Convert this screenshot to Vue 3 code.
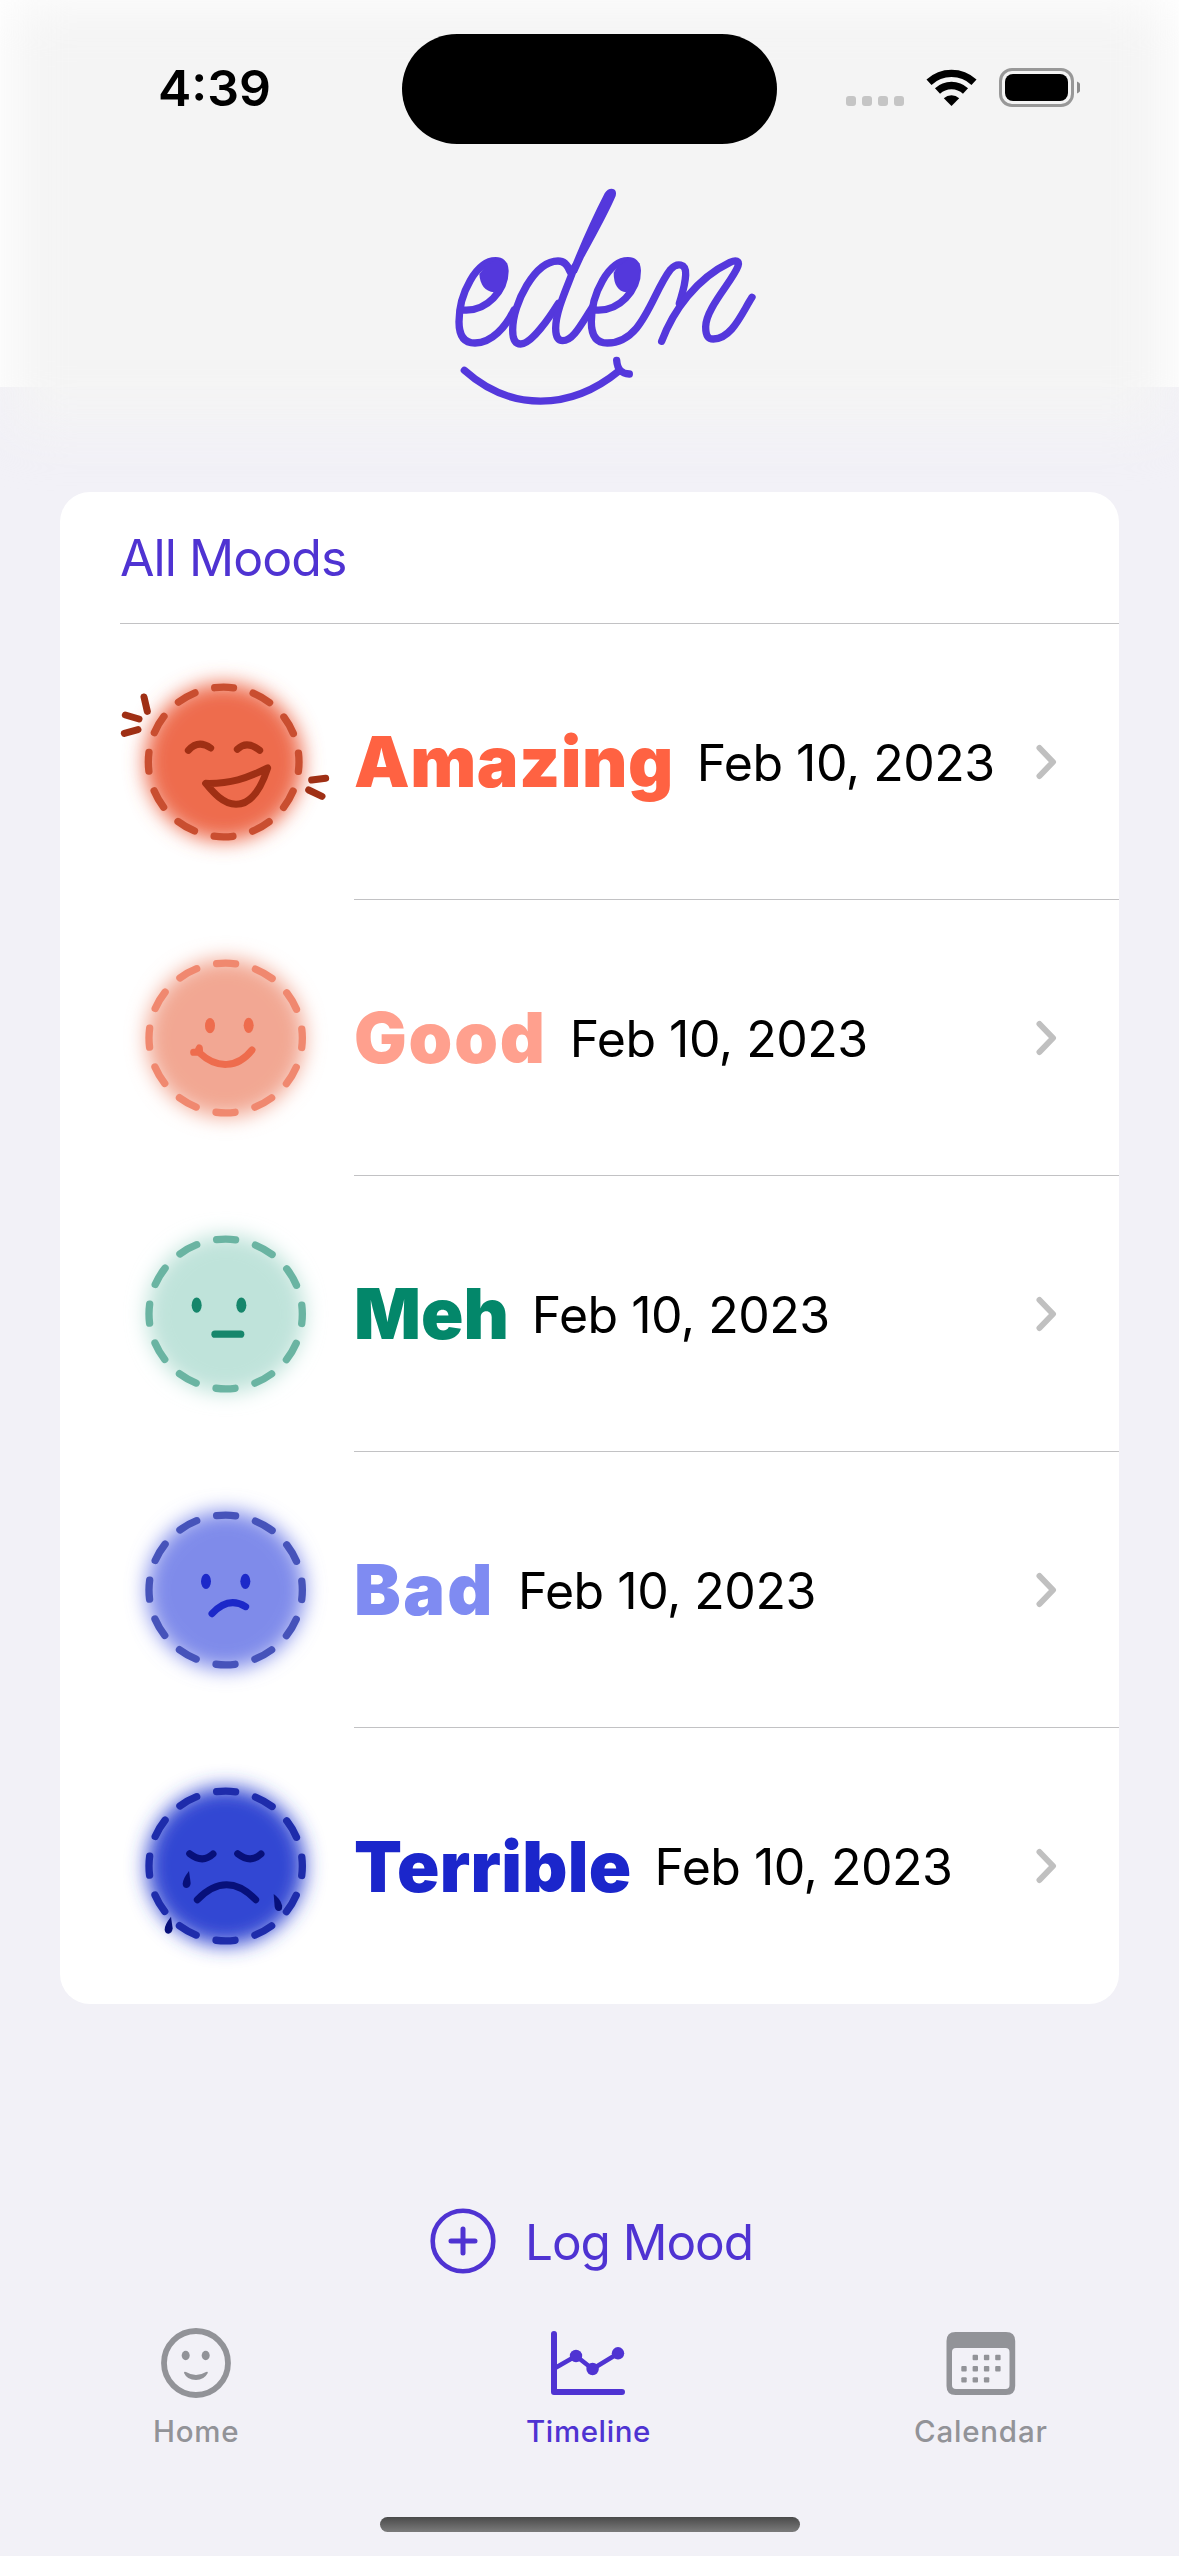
<script setup>
const moods = [
  { id: 'amazing', name: 'Amazing', color: '#ff6242', glow: '#ee6c4d', dash: '#c94e30', line: '#9f2f14', cx: 371, cy: 336, rx: 226 },
  { id: 'good', name: 'Good', color: '#ffa08e', glow: '#f2a793', dash: '#f0886f', line: '#ee6c4d', cx: 377, cy: 324, rx: 230 },
  { id: 'meh', name: 'Meh', color: '#03876a', glow: '#bfe3da', dash: '#6ab4a2', line: '#16866b', cx: 377, cy: 327, rx: 230 },
  { id: 'bad', name: 'Bad', color: '#7f8bf2', glow: '#7f8bea', dash: '#4653ba', line: '#1c29c9', cx: 377, cy: 330, rx: 230 },
  { id: 'terrible', name: 'Terrible', color: '#1b26cb', glow: '#3346d3', dash: '#1e2cab', line: '#07107a', cx: 377, cy: 333, rx: 230 },
]
</script>

<template>
  <div class="screen">
    <header class="header">
      <div class="haze"></div>
      <div class="status">
        <div class="time">4:39</div>
        <div class="island"></div>
        <div class="indicators">
          <svg width="240" height="48" viewBox="840 64 240 48">
            <g fill="#c5c5c5">
              <rect v-for="i in 4" :key="i" :x="830 + i * 16" y="96" width="10" height="10" rx="3" />
            </g>
            <g fill="none" stroke="#000" stroke-width="7.4">
              <path d="M929 82.200 A33 33 0 0 1 974 82.200" />
              <path d="M937.500 91 A20.500 20.500 0 0 1 965.500 91" />
            </g>
            <path d="M951.500 106 L943.800 98.200 A11.500 11.500 0 0 1 959.200 98.200 Z" />
            <rect x="1000.500" y="69.500" width="72" height="36" rx="11.500" fill="none" stroke="#989898" stroke-width="3" />
            <rect x="1005" y="74" width="63" height="27" rx="8" />
            <path d="M1077 81.500 Q1081.200 83.500 1081.200 87.500 T1077 93.500 Z" fill="#8c8c8c" />
          </svg>
        </div>
      </div>
      <svg class="logo" viewBox="0 0 1050 750">
        <g fill="none" stroke="#5438dc" stroke-width="22" stroke-linecap="round" stroke-linejoin="round">
          <path d="M100 420 C172 425 226 360 225 302 C224 280 212 272 197 272 C140 272 87 370 87 455 C87 500 105 519 135 519 C185 519 228 470 252 420" />
          <path d="M420 305 C412 281 400 273 384 273 C315 273 248 400 248 480 C248 510 256 522 272 522 C305 522 360 440 385 400" />
          <path d="M434 290 C415 345 377 420 377 475 C377 500 383 512 398 512 C430 512 455 460 488 410" />
          <path d="M497 420 C569 425 623 360 622 302 C621 280 609 272 594 272 C537 272 484 370 484 455 C484 500 502 519 532 519 C640 519 665 370 722 298 C740 278 769 278 767 315 C765 350 755 375 748 400" />
          <path d="M695 514 C730 420 800 325 900 277 C918 269 929 272 924 288 C910 330 827 415 827 470 C827 495 832 507 850 507 C905 507 935 430 966 382" />
        </g>
        <g fill="#5438dc">
          <path d="M524 70 Q535 54 549 57 Q561 60 557 78 Q535 130 462 262 L440 310 L420 300 Q470 175 524 70 Z" />
          <path d="M148 312 C150 345 165 364 192 367 L226 335 L232 280 L200 266 L165 290 Z" />
          <path d="M551 308 C551 345 565 364 589 367 L623 335 L629 280 L597 266 L562 290 Z" />
        </g>
        <g fill="none" stroke="#5438dc" stroke-width="22" stroke-linecap="round" stroke-linejoin="round">
          <path d="M103 601 C240 724 420 724 568 602" />
          <path d="M560 571 C562 598 574 611 598 612" />
        </g>
      </svg>
    </header>

    <main class="card">
      <div class="all">All Moods</div>
      <div v-for="m in moods" :key="m.id" class="row">
        <svg class="face" :viewBox="`60 ${m.cy - 330} 702 660`">
          <defs>
            <filter :id="'blur-' + m.id" x="-40%" y="-40%" width="180%" height="180%">
              <feGaussianBlur stdDeviation="31" />
            </filter>
          </defs>
          <circle :cx="m.cx" :cy="m.cy" r="237" :fill="m.glow" :filter="`url(#blur-${m.id})`" />
          <ellipse :cx="m.cx" :cy="m.cy" :rx="m.rx" ry="224.500" fill="none" :stroke="m.dash" stroke-width="22" stroke-linecap="round" pathLength="360" stroke-dasharray="14.500 15.500" stroke-dashoffset="7.250" />
          <g v-if="m.id === 'amazing'" fill="none" :stroke="m.line" stroke-width="21" stroke-linecap="round" stroke-linejoin="round">
            <path d="M132 141 L142 184 M76 195 L117 207 M73 250 L114 239 M635 390 L677 385 M626 420 L666 439" />
            <path d="M265 301 Q295 268 332 294 M412 298 Q440 270 479 301" />
            <path d="M317 400 C390 402 440 385 503 354 C485 410 455 463 408 463 C370 463 340 428 317 400 Z" />
          </g>
          <g v-else-if="m.id === 'good'">
            <ellipse cx="330" cy="287" rx="15" ry="23" :fill="m.line" />
            <ellipse cx="446" cy="286" rx="15" ry="23" :fill="m.line" />
            <path d="M281 367 L292 366 L298 354 L299 369 C350 417 413 415 456 360" fill="none" :stroke="m.line" stroke-width="21" stroke-linecap="round" stroke-linejoin="round" />
          </g>
          <g v-else-if="m.id === 'meh'">
            <ellipse cx="290" cy="300.500" rx="15" ry="23" :fill="m.line" />
            <ellipse cx="424" cy="300.500" rx="15" ry="23" :fill="m.line" />
            <path d="M345 387.500 H422" :stroke="m.line" stroke-width="22" stroke-linecap="round" />
          </g>
          <g v-else-if="m.id === 'bad'">
            <ellipse cx="318" cy="304" rx="15" ry="23" :fill="m.line" />
            <ellipse cx="436" cy="304" rx="15" ry="23" :fill="m.line" />
            <path d="M336 401 Q385 348 437 380" fill="none" :stroke="m.line" stroke-width="21" stroke-linecap="round" />
          </g>
          <g v-else>
            <path d="M269 296 Q308 326 339 297 M413 296 Q452 326 483 297 M292 434 Q380 345 467 434" fill="none" :stroke="m.line" stroke-width="21" stroke-linecap="round" />
            <path d="M267 348 Q248 372 248 387 Q249 399 260 399 Q271 398 272 384 Z" :fill="m.line" />
            <path d="M213 485 Q193 510 194 524 Q195 536 206 536 Q217 534 218 520 Z" :fill="m.line" />
            <path d="M521 417 Q541 431 546 451 Q549 466 538 468 Q527 469 524 456 Z" :fill="m.line" />
          </g>
        </svg>
        <div class="body">
          <strong class="name" :class="m.id" :style="{ color: m.color }">{{ m.name }}</strong>
          <span class="date">Feb 10, 2023</span>
          <svg class="chevron" width="21" height="36" viewBox="0 0 21 36">
            <path d="M3.500 4 L17 18 L3.500 32" fill="none" stroke="#c0c0c0" stroke-width="6" stroke-linecap="round" stroke-linejoin="round" />
          </svg>
        </div>
      </div>
    </main>

    <div class="log">
      <svg width="66" height="66" viewBox="0 0 66 66" fill="none" stroke="#4f33d2" stroke-linecap="round">
        <circle cx="33" cy="33" r="30.300" stroke-width="4.600" />
        <path d="M33 21 V45 M21 33 H45" stroke-width="5" />
      </svg>
      <span>Log Mood</span>
    </div>

    <nav class="tabs">
      <div class="tab">
        <svg width="72" height="72" viewBox="160 2327 72 72">
          <circle cx="196" cy="2363" r="32" fill="none" stroke="#929398" stroke-width="5.800" />
          <ellipse cx="185.700" cy="2355.500" rx="4" ry="4.700" fill="#929398" />
          <ellipse cx="205.700" cy="2355.500" rx="4" ry="4.700" fill="#929398" />
          <path d="M184 2373 Q184 2371 186 2372 Q196 2378 206 2372 Q208 2371 207.800 2373 Q204 2380 196 2380 Q187 2380 184 2373 Z" fill="#929398" />
        </svg>
        <span>Home</span>
      </div>
      <div class="tab active">
        <svg width="76" height="72" viewBox="551 2327 76 72" fill="none" stroke="#4f33d2">
          <path d="M555 2334 V2392 H623" stroke-width="6" stroke-linecap="round" stroke-linejoin="round" />
          <path d="M557 2367.500 L577 2356 L593.600 2369 L619 2353.500" stroke-width="4.500" />
          <g fill="#4f33d2" stroke="none">
            <circle cx="577" cy="2356" r="6.200" />
            <circle cx="593.600" cy="2369" r="6.200" />
            <circle cx="619" cy="2353.300" r="6.200" />
          </g>
        </svg>
        <span>Timeline</span>
      </div>
      <div class="tab">
        <svg width="70" height="72" viewBox="946.500 2327 70 72" fill="#929398">
          <path fill-rule="evenodd" d="M956 2332 H1006.500 Q1015.700 2332 1015.700 2341 V2386 Q1015.700 2395 1006.500 2395 H956 Q947 2395 947 2386 V2341 Q947 2332 956 2332 Z M956.500 2348 Q952.500 2348 952.500 2352 V2385 Q952.500 2389 956.500 2389 H1006 Q1010 2389 1010 2385 V2352 Q1010 2348 1006 2348 Z" />
          <g v-for="r in 3" :key="r">
            <template v-for="c in 4" :key="c">
              <rect v-if="!(r === 1 && c === 1) && !(r === 3 && c === 4)" :x="950.500 + c * 11.300" :y="2343.700 + r * 11.150" width="5.400" height="5.400" rx="1" />
            </template>
          </g>
        </svg>
        <span>Calendar</span>
      </div>
    </nav>
    <div class="home-bar"></div>
  </div>
</template>

<style>
body { margin: 0; background: #f2f1f7; }
</style>

<style scoped>
.screen { width: 1179px; height: 2556px; background: #f2f1f7; display: flex; flex-direction: column; overflow: hidden; font-family: Inter, "Liberation Sans", sans-serif; color: #000; }
.header { position: relative; height: 492px; flex: none; display: flex; flex-direction: column; align-items: center; background: linear-gradient(#ffffff 387px, transparent 387px); }
.haze { position: absolute; left: 12px; right: 12px; top: 2px; height: 424px; background: #f4f4f4; filter: blur(27px); }
.status { position: relative; width: 100%; height: 170px; display: flex; }
.time { width: 402px; padding-left: 158px; box-sizing: border-box; line-height: 176px; font-size: 50px; font-weight: 600; }
.island { width: 375px; height: 110px; margin-top: 34px; background: #000; border-radius: 55px; }
.indicators { padding: 64px 0 0 63px; }
.logo { position: relative; width: 350px; height: 250px; margin-left: 31px; }
.card { flex: none; margin: 0 60px; height: 1512px; background: #fff; border-radius: 30px; }
.all { height: 131px; margin-left: 60px; border-bottom: 1px solid #c2c2c4; line-height: 133px; font-size: 50px; letter-spacing: -0.95px; color: #4f33d2; }
.row { height: 276px; padding-left: 60px; display: flex; align-items: center; }
.face { width: 234px; height: 220px; flex: none; overflow: visible; }
.body { flex: 1; height: 276px; box-sizing: border-box; border-bottom: 1px solid #c2c2c4; display: flex; align-items: center; }
.row:last-child .body { border-bottom: 0; }
.name { font-size: 70px; font-weight: 900; line-height: 84px; padding-top: 1px; }
.name.amazing { letter-spacing: 0.5px; }
.name.good { letter-spacing: 1.8px; }
.name.bad { letter-spacing: 2.4px; }
.name.terrible { letter-spacing: 0.35px; }
.date { font-size: 50px; line-height: 60px; letter-spacing: -0.5px; margin-left: 23px; padding-top: 2px; }
.chevron { margin-left: auto; margin-right: 62px; }
.log { height: 66px; margin-top: 204px; margin-left: 4px; display: flex; align-items: center; justify-content: center; gap: 29px; font-size: 49.5px; letter-spacing: -1.05px; color: #4f33d2; }
.log span { padding-top: 2px; }
.tabs { display: flex; margin-top: 53px; margin-right: 2px; }
.tab { flex: 1; display: flex; flex-direction: column; align-items: center; font-size: 29.5px; font-weight: 500; line-height: 36px; letter-spacing: 0.8px; color: #929398; }
.tab span { margin-top: 14px; }
.tab.active { color: #4f33d2; letter-spacing: 0.6px; }
.home-bar { width: 420px; height: 15px; margin: 68px auto 0; border-radius: 8px; background: linear-gradient(#4a4a4a, #7b7b7b); }
</style>
